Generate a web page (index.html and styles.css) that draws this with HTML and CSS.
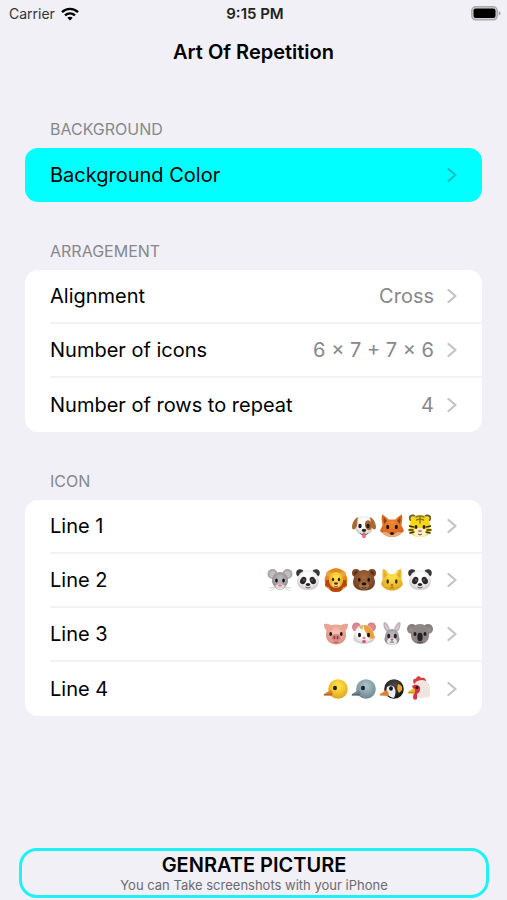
FILE: index.html
```html
<!DOCTYPE html>
<html lang="en">
<head>
    <meta charset="UTF-8">
    <meta name="viewport" content="width=device-width, initial-scale=1.0">
    <title>Art Of Repetition</title>
    <link rel="stylesheet" href="styles.css">
</head>
<body>
    <!-- Shared icons -->
    <svg class="sprite" aria-hidden="true">
        <defs>
            <radialGradient id="g-white" cx=".5" cy=".4" r=".6"><stop offset=".5" stop-color="#fbfafa"/><stop offset="1" stop-color="#cfc9c8"/></radialGradient>
            <radialGradient id="g-orange" cx=".5" cy=".4" r=".6"><stop offset="0" stop-color="#f08a35"/><stop offset="1" stop-color="#d2611b"/></radialGradient>
            <radialGradient id="g-yellow" cx=".5" cy=".35" r=".65"><stop offset=".2" stop-color="#fddc45"/><stop offset="1" stop-color="#dfa41c"/></radialGradient>
            <radialGradient id="g-grey" cx=".5" cy=".4" r=".6"><stop offset=".2" stop-color="#b9b5b8"/><stop offset="1" stop-color="#8b868a"/></radialGradient>
            <radialGradient id="g-brown" cx=".5" cy=".35" r=".65"><stop offset="0" stop-color="#a8693c"/><stop offset="1" stop-color="#6f3f20"/></radialGradient>
            <radialGradient id="g-pink" cx=".5" cy=".4" r=".6"><stop offset=".2" stop-color="#f6bcae"/><stop offset="1" stop-color="#d98f83"/></radialGradient>
            <radialGradient id="g-blue" cx=".5" cy=".35" r=".65"><stop offset=".1" stop-color="#a9c0c6"/><stop offset="1" stop-color="#6c8791"/></radialGradient>
            <radialGradient id="g-black" cx=".5" cy=".3" r=".7"><stop offset="0" stop-color="#4b4b4d"/><stop offset="1" stop-color="#111"/></radialGradient>
        </defs>

        <symbol id="chevron" viewBox="0 0 10 16">
            <path d="M1.5 2 L8.5 8 L1.5 14" fill="none" stroke="currentColor" stroke-width="2.300" stroke-linecap="round" stroke-linejoin="round"/>
        </symbol>

        <symbol id="dog" viewBox="0 0 28 28">
            <path d="M14 4C8 4 5 8 5 14c0 6 4 9 9 9s9-3 9-9c0-6-3-10-9-10z" fill="url(#g-white)"/>
            <path d="M16 9c3-2 6 1 6 5 0 3-2 5-4 4-3-1-4-7-2-9z" fill="#a8672e"/>
            <path d="M8 5C5 6 2 11 2 15c0 3 2 3 4 1 2-3 1-8 2-11zM20 5c3 1 6 6 6 10 0 3-2 3-4 1-2-3-1-8-2-11z" fill="#a96a34"/>
            <ellipse cx="10" cy="14" rx="1.700" ry="2.300" fill="#221a17"/>
            <ellipse cx="18" cy="14" rx="1.700" ry="2.300" fill="#221a17"/>
            <path d="M12 22h4v2c0 3-4 3-4 0z" fill="#ef6f8d"/>
            <path d="M14 19v2m-4 0c1 2 3 2 4 0 1 2 3 2 4 0" fill="none" stroke="#6c5550" stroke-width=".8"/>
            <ellipse cx="14" cy="18.300" rx="2.300" ry="1.500" fill="#2a2020"/>
        </symbol>

        <symbol id="fox" viewBox="0 0 28 28">
            <path d="M4 2.500c2.500 1 5 3 6.500 5h7c1.500-2 4-4 6.500-5 .8 4 0 8-.6 10.500L26 19c-3 3-7 6-12 6s-9-3-12-6l2.600-6C4 10.500 3.200 6.500 4 2.500z" fill="url(#g-orange)"/>
            <path d="M5.500 5l3.500 4-3 3zM22.500 5L19 9l3 3z" fill="#8d421b"/>
            <path d="M4 20.500c3-1 6 0 7.500 1.500h5c1.500-1.500 4.500-2.500 7.500-1.500-3 3-6 4.500-10 4.500s-7-1.500-10-4.500z" fill="#e9ab78"/>
            <ellipse cx="9.700" cy="15" rx="1.500" ry="2.200" fill="#211512"/>
            <ellipse cx="18.300" cy="15" rx="1.500" ry="2.200" fill="#211512"/>
            <ellipse cx="14" cy="21.500" rx="2" ry="1.500" fill="#241615"/>
        </symbol>

        <symbol id="tiger" viewBox="0 0 28 28">
            <circle cx="6.500" cy="6" r="3.600" fill="#6b5a22"/><circle cx="21.500" cy="6" r="3.600" fill="#6b5a22"/>
            <circle cx="6.800" cy="6.500" r="2.300" fill="#f2d94b"/><circle cx="21.200" cy="6.500" r="2.300" fill="#f2d94b"/>
            <path d="M14 3C8 3 4 7 4 13l-1 6c2 4 6 6 11 6s9-2 11-6l-1-6c0-6-4-10-10-10z" fill="#f8d61c"/>
            <path d="M7 20c0-3 3-4 7-4s7 1 7 4-3 5-7 5-7-2-7-5z" fill="#faf0cb"/>
            <path d="M10 5q4-2 8 0M10.500 8q3.500-2 7 0M14 4v7" fill="none" stroke="#8c7a12" stroke-width="1.500" stroke-linecap="round"/>
            <path d="M3.500 14l4 1M3 18l4 0M4 21l4-1M24.500 14l-4 1M25 18l-4 0M24 21l-4-1" fill="none" stroke="#392d16" stroke-width="1.500" stroke-linecap="round"/>
            <ellipse cx="10" cy="15" rx="1.400" ry="2" fill="#201b13"/><ellipse cx="18" cy="15" rx="1.400" ry="2" fill="#201b13"/>
            <ellipse cx="14" cy="19" rx="2" ry="1.300" fill="#d98076"/>
            <path d="M12 22q2 2 4 0" fill="none" stroke="#6d4931"/>
        </symbol>

        <symbol id="mouse" viewBox="0 0 28 28">
            <circle cx="6.500" cy="8" r="5" fill="#a9a5a9"/><circle cx="21.500" cy="8" r="5" fill="#a9a5a9"/>
            <circle cx="6.700" cy="8.500" r="3.200" fill="#c7bcc0"/><circle cx="21.300" cy="8.500" r="3.200" fill="#c7bcc0"/>
            <path d="M14 6c-5 0-8 4-8 9 0 4 5 9 8 9s8-5 8-9c0-5-3-9-8-9z" fill="url(#g-grey)"/>
            <path d="M9 20q5-5 10 0-3 4-5 4t-5-4z" fill="#e4dfdf"/>
            <ellipse cx="10.500" cy="14.500" rx="1.300" ry="2" fill="#171417"/><ellipse cx="17.500" cy="14.500" rx="1.300" ry="2" fill="#171417"/>
            <ellipse cx="14" cy="19.500" rx="2" ry="1.400" fill="#eb8da0"/>
            <path d="M9 21l-6 1M9 22l-5 3M19 21l6 1M19 22l5 3" stroke="#c6c3c5" stroke-width=".7"/>
        </symbol>

        <symbol id="panda" viewBox="0 0 28 28">
            <circle cx="6" cy="7" r="3.800" fill="#373638"/><circle cx="22" cy="7" r="3.800" fill="#373638"/>
            <path d="M14 4C8 4 3 9 3 15c0 6 5 9 11 9s11-3 11-9c0-6-5-11-11-11z" fill="url(#g-white)"/>
            <ellipse cx="9.200" cy="14.500" rx="2.900" ry="3.800" transform="rotate(25 9.200 14.500)" fill="#29282a"/>
            <ellipse cx="18.800" cy="14.500" rx="2.900" ry="3.800" transform="rotate(-25 18.800 14.500)" fill="#29282a"/>
            <circle cx="10" cy="14" r=".8" fill="#858287"/><circle cx="18" cy="14" r=".8" fill="#858287"/>
            <ellipse cx="14" cy="18.500" rx="2.200" ry="1.500" fill="#222"/>
            <path d="M11.500 21q2.500 2 5 0" fill="none" stroke="#5e5a5d"/>
        </symbol>

        <symbol id="lion" viewBox="0 0 28 28">
            <path d="M14 2l4 1 4 2 2 4 1.500 4-.5 4-1 4-4 3-3 2-3 0-3 0-3-2-4-3-1-4-.5-4L4 9l2-4 4-2z" fill="#e8861a"/>
            <path d="M4 14l-1 6 4 1 2 4 5 1 5-1 2-4 4-1-1-6z" fill="#b5450f"/>
            <circle cx="7" cy="8" r="2.800" fill="#eba43a"/><circle cx="21" cy="8" r="2.800" fill="#eba43a"/>
            <path d="M14 6c-5 0-7 3-7 8 0 5 3 8 7 8s7-3 7-8c0-5-2-8-7-8z" fill="url(#g-yellow)"/>
            <ellipse cx="14" cy="18.500" rx="3.800" ry="2.500" fill="#f7dda0"/>
            <ellipse cx="11" cy="13.500" rx="1.200" ry="1.800" fill="#2c1a0d"/><ellipse cx="17" cy="13.500" rx="1.200" ry="1.800" fill="#2c1a0d"/>
            <ellipse cx="14" cy="17.500" rx="2" ry="1.300" fill="#5b3017"/>
            <path d="M12 20q2 1.500 4 0" fill="none" stroke="#75421f" stroke-width=".8"/>
        </symbol>

        <symbol id="bear" viewBox="0 0 28 28">
            <circle cx="6" cy="7" r="4" fill="#7d4a29"/><circle cx="22" cy="7" r="4" fill="#7d4a29"/>
            <circle cx="6.200" cy="7.300" r="2" fill="#4f2d19"/><circle cx="21.800" cy="7.300" r="2" fill="#4f2d19"/>
            <path d="M14 4C8 4 3.500 9 3 16c0 6 5 8.500 11 8.500S25 22 25 16C24.500 9 20 4 14 4z" fill="url(#g-brown)"/>
            <ellipse cx="14" cy="19.500" rx="5" ry="4" fill="#a87549"/>
            <ellipse cx="9.300" cy="13.800" rx="1.300" ry="1.900" fill="#1b100b"/><ellipse cx="18.700" cy="13.800" rx="1.300" ry="1.900" fill="#1b100b"/>
            <ellipse cx="14" cy="17.800" rx="2.600" ry="1.600" fill="#25150f"/>
            <path d="M11.500 21.500q2.500 1.500 5 0" fill="none" stroke="#4d2a19"/>
        </symbol>

        <symbol id="cat" viewBox="0 0 28 28">
            <path d="M5 3c2 0 5 3 6 5h6c1-2 4-5 6-5 1 4 .5 8 .5 11L25 18c-2 4-6 6.500-11 6.500S5 22 3 18l1.500-4C4.500 11 4 7 5 3z" fill="url(#g-yellow)"/>
            <path d="M6.200 6L9 9l-3 3zM21.800 6L19 9l3 3z" fill="#dfa534"/>
            <ellipse cx="9.700" cy="15.500" rx="1.200" ry="2.200" fill="#403012"/><ellipse cx="18.300" cy="15.500" rx="1.200" ry="2.200" fill="#403012"/>
            <ellipse cx="14" cy="19" rx="1.500" ry="1" fill="#c06d49"/>
            <path d="M14 20v1m-2 1q2 0 2-1 0 1 2 1" fill="none" stroke="#94661d" stroke-width=".8"/>
        </symbol>

        <symbol id="pig" viewBox="0 0 28 28">
            <path d="M14 4.500C7 4.500 4 9 4 15c0 6 5 9.500 10 9.500S24 21 24 15c0-6-3-10.500-10-10.500z" fill="url(#g-pink)"/>
            <path d="M2 4c4-1 8 1 9 4l-5 4C3 10 2 7 2 4zM26 4c-4-1-8 1-9 4l5 4c3-2 4-5 4-8z" fill="#e9a494"/>
            <ellipse cx="8.700" cy="14" rx="1.400" ry="2" fill="#241716"/><ellipse cx="19.300" cy="14" rx="1.400" ry="2" fill="#241716"/>
            <ellipse cx="14" cy="17.500" rx="4.500" ry="3.400" fill="#d98484"/>
            <ellipse cx="12.400" cy="17.500" rx=".9" ry="1.500" fill="#7b373c"/><ellipse cx="15.600" cy="17.500" rx=".9" ry="1.500" fill="#7b373c"/>
            <path d="M11.500 22q2.500 1.500 5 0" fill="none" stroke="#a5584f"/>
        </symbol>

        <symbol id="hamster" viewBox="0 0 28 28">
            <circle cx="6.500" cy="7" r="4.500" fill="#c68b82"/><circle cx="21.500" cy="7" r="4.500" fill="#c68b82"/>
            <circle cx="6.700" cy="7.300" r="3.200" fill="#e5859a"/><circle cx="21.300" cy="7.300" r="3.200" fill="#e5859a"/>
            <path d="M14 5C8 5 5 9 4 15c-3 5 3 9 10 9s13-4 10-9c-1-6-4-10-10-10z" fill="url(#g-white)"/>
            <path d="M14 5c5 0 9 4 10 10l1 3c-4 2-7 0-8-3-1-4-4-5-3-10z" fill="#eda13c"/>
            <path d="M14 5c-2 0-4 1-5 2l3 3z" fill="#edaf5c"/>
            <ellipse cx="9.500" cy="15" rx="1.500" ry="2.200" fill="#201817"/><ellipse cx="18.500" cy="15" rx="1.500" ry="2.200" fill="#201817"/>
            <ellipse cx="14" cy="18" rx="1.700" ry="1.200" fill="#ed7f91"/>
            <path d="M12 22v-1q2-2 4 0v1q-2 2-4 0" fill="#d5566e"/>
        </symbol>

        <symbol id="rabbit" viewBox="0 0 28 28">
            <path d="M9 12C5 9 5 3 6 2c3 0 6 5 6 9zM19 12c4-3 4-9 3-10-3 0-6 5-6 9z" fill="#b9b5b8"/>
            <path d="M9.500 10C7 8 6.500 5 7 4c2 1 3 4 3.500 6zM18.500 10C21 8 21.500 5 21 4c-2 1-3 4-3.500 6z" fill="#dbc8cd"/>
            <path d="M14 9c-4 0-7 4-7 8-2 4 2 8 7 8s9-4 7-8c0-4-3-8-7-8z" fill="url(#g-grey)"/>
            <ellipse cx="14" cy="21.500" rx="5" ry="3.500" fill="#e8e5e6"/>
            <ellipse cx="10.700" cy="16" rx="1.500" ry="2.200" fill="#252126"/><ellipse cx="17.300" cy="16" rx="1.500" ry="2.200" fill="#252126"/>
            <ellipse cx="14" cy="19.500" rx="1.500" ry="1" fill="#b96a78"/>
            <path d="M14 20v2m-2 0q2 1 4 0" fill="none" stroke="#71686c" stroke-width=".8"/>
        </symbol>

        <symbol id="koala" viewBox="0 0 28 28">
            <circle cx="6" cy="9" r="5" fill="#857d7d"/><circle cx="22" cy="9" r="5" fill="#857d7d"/>
            <circle cx="5.500" cy="10" r="2.800" fill="#968d8d"/><circle cx="22.500" cy="10" r="2.800" fill="#968d8d"/>
            <path d="M14 4C8 4 5 8 5 15c0 6 4 9 9 9s9-3 9-9c0-7-3-11-9-11z" fill="#8f8786"/>
            <ellipse cx="9" cy="14" rx="1.500" ry="2" fill="#211e1f"/><ellipse cx="19" cy="14" rx="1.500" ry="2" fill="#211e1f"/>
            <ellipse cx="14" cy="17" rx="2.700" ry="4.300" fill="#252324"/>
            <path d="M11 22q3 1.500 6 0" fill="none" stroke="#4d4747"/>
        </symbol>

        <symbol id="chick" viewBox="0 0 28 28">
            <circle cx="16" cy="14" r="9.800" fill="url(#g-yellow)"/>
            <path d="M8.500 15l-6.500 4q-1 1 0 1.500l8 .5q2-3-1.500-6z" fill="#dd842c"/>
            <path d="M2 20l8-1" stroke="#9c5820" stroke-width=".8"/>
            <ellipse cx="13" cy="13" rx="2" ry="2.300" fill="#29200d"/>
        </symbol>

        <symbol id="bird" viewBox="0 0 28 28">
            <circle cx="16" cy="14" r="9.800" fill="url(#g-blue)"/>
            <path d="M8.500 15l-6.500 4q-1 1 0 1.500l8 .5q2-3-1.500-6z" fill="#71858d"/>
            <path d="M2 20l8-1" stroke="#485b64" stroke-width=".8"/>
            <ellipse cx="13" cy="13" rx="2" ry="2.300" fill="#17232b"/>
        </symbol>

        <symbol id="penguin" viewBox="0 0 28 28">
            <circle cx="16" cy="14" r="9.800" fill="url(#g-black)"/>
            <path d="M9 12q4-3 7 0 3 5 0 11-6-1-8-6z" fill="#e9edf0"/>
            <path d="M20 9q5 1 4 6l-3 3q-3-4-1-9z" fill="#f0a725"/>
            <path d="M8.500 15l-6.500 4q-1 1 0 1.500l8 .5q2-3-1.500-6z" fill="#db842f"/>
            <ellipse cx="13" cy="13.500" rx="1.900" ry="2.300" fill="#15171b"/>
        </symbol>

        <symbol id="chicken" viewBox="0 0 28 28">
            <path d="M8 9C6 5 8 3 10 4c0-3 4-4 5-1 3-1 6 1 5 5l-8 3z" fill="#da3b41"/>
            <path d="M16 5c-6 0-9 4-9 9 0 5 2 9 8 9l8-1c2-2 1-5 1-8 0-5-3-9-8-9z" fill="#ede5df"/>
            <path d="M6 11q5-3 8 1 1 5-3 7v5q-3 2-4-1l1-7z" fill="#d4353e"/>
            <path d="M8 13l-6 4q-1 1 0 1l6 1q2-3 0-6z" fill="#f0b92e"/>
            <path d="M2 18l6-1" stroke="#b67b24" stroke-width=".8"/>
            <circle cx="11" cy="12.500" r="1.600" fill="#29171a"/>
        </symbol>
    </svg>

    <div class="status-bar">
        <div class="carrier">
            <span>Carrier</span>
            <svg class="wifi" viewBox="0 0 18 14" aria-hidden="true">
                <g fill="none" stroke="#000" stroke-width="2.400">
                    <path d="M1 5.200C5.500 .8 12.500 .8 17 5.200"/>
                    <path d="M4 8.400C7 5.700 11 5.700 14 8.400"/>
                </g>
                <path d="M6.300 10.700Q9 8.600 11.700 10.700L9 13.600z"/>
            </svg>
        </div>
        <span class="time">9:15 PM</span>
        <div class="battery-wrap">
            <svg class="battery" viewBox="0 0 30 15" aria-hidden="true">
                <rect x=".8" y=".8" width="25.400" height="13" rx="4" fill="#d4d4d7" stroke="#aaaaac" stroke-width="1.500"/>
                <rect x="2.500" y="2.500" width="22" height="9.600" rx="2"/>
                <path d="M27.600 5q2 .5 2 2.300t-2 2.300z" fill="#aaaaac"/>
            </svg>
        </div>
    </div>

    <header class="header">
        <h1>Art Of Repetition</h1>
    </header>

    <main class="main">
        <section class="section">
            <h2>Background</h2>
            <div class="card card-color">
                <a href="#" class="row">
                    <span class="label">Background Color</span>
                    <svg class="chevron"><use href="#chevron"/></svg>
                </a>
            </div>
        </section>

        <section class="section">
            <h2>Arragement</h2>
            <div class="card">
                <a href="#" class="row">
                    <span class="label">Alignment</span>
                    <span class="value">Cross</span>
                    <svg class="chevron"><use href="#chevron"/></svg>
                </a>
                <a href="#" class="row">
                    <span class="label">Number of icons</span>
                    <span class="value">6 × 7 + 7 × 6</span>
                    <svg class="chevron"><use href="#chevron"/></svg>
                </a>
                <a href="#" class="row">
                    <span class="label">Number of rows to repeat</span>
                    <span class="value">4</span>
                    <svg class="chevron"><use href="#chevron"/></svg>
                </a>
            </div>
        </section>

        <section class="section">
            <h2>Icon</h2>
            <div class="card">
                <a href="#" class="row">
                    <span class="label">Line 1</span>
                    <span class="icons">
                        <svg><use href="#dog"/></svg>
                        <svg><use href="#fox"/></svg>
                        <svg><use href="#tiger"/></svg>
                    </span>
                    <svg class="chevron"><use href="#chevron"/></svg>
                </a>
                <a href="#" class="row">
                    <span class="label">Line 2</span>
                    <span class="icons">
                        <svg><use href="#mouse"/></svg>
                        <svg><use href="#panda"/></svg>
                        <svg><use href="#lion"/></svg>
                        <svg><use href="#bear"/></svg>
                        <svg><use href="#cat"/></svg>
                        <svg><use href="#panda"/></svg>
                    </span>
                    <svg class="chevron"><use href="#chevron"/></svg>
                </a>
                <a href="#" class="row">
                    <span class="label">Line 3</span>
                    <span class="icons">
                        <svg><use href="#pig"/></svg>
                        <svg><use href="#hamster"/></svg>
                        <svg><use href="#rabbit"/></svg>
                        <svg><use href="#koala"/></svg>
                    </span>
                    <svg class="chevron"><use href="#chevron"/></svg>
                </a>
                <a href="#" class="row">
                    <span class="label">Line 4</span>
                    <span class="icons">
                        <svg><use href="#chick"/></svg>
                        <svg><use href="#bird"/></svg>
                        <svg><use href="#penguin"/></svg>
                        <svg><use href="#chicken"/></svg>
                    </span>
                    <svg class="chevron"><use href="#chevron"/></svg>
                </a>
            </div>
        </section>
    </main>

    <footer class="footer">
        <button type="button" class="generate">
            <span class="generate-title">GENRATE PICTURE</span>
            <span class="generate-note">You can Take screenshots with your iPhone</span>
        </button>
    </footer>
</body>
</html>
```
FILE: styles.css
```css
/* Global Styles */
* {
    box-sizing: border-box;
}

body {
    display: flex;
    flex-direction: column;
    min-height: 100vh;
    margin: 0;
    background-color: #f1f0f6;
    font-family: Inter, "Liberation Sans", sans-serif;
    color: #000;
}

.sprite {
    position: absolute;
    width: 0;
    height: 0;
}

/* Status Bar */
.status-bar {
    display: grid;
    grid-template-columns: 1fr auto 1fr;
    align-items: center;
    height: 27px;
    padding: 0 6px 0 9px;
    font-size: 14px;
}

.carrier {
    display: flex;
    align-items: center;
    gap: 6px;
    color: #333;
}

.wifi {
    width: 18px;
    height: 14px;
}

.time {
    font-size: 15px;
    font-weight: 600;
    color: #222;
}

.battery-wrap {
    display: flex;
    justify-content: flex-end;
}

.battery {
    width: 30px;
    height: 15px;
}

/* Header Styles */
.header h1 {
    margin: 0;
    font-size: 20px;
    font-weight: 600;
    line-height: 50px;
    text-align: center;
}

/* List Styles */
.main {
    padding: 3px 25px 24px;
}

.section h2 {
    margin: 0;
    padding: 39px 25px 9px;
    font-size: 16px;
    font-weight: 400;
    line-height: 20px;
    text-transform: uppercase;
    color: #88878c;
}

.card {
    border-radius: 13px;
    background-color: #fff;
    overflow: hidden;
}

.card-color {
    background-color: #00ffff;
}

.row {
    display: flex;
    align-items: center;
    height: 54px;
    padding-right: 25px;
    margin-left: 25px;
    font-size: 20px;
    color: #000;
    text-decoration: none;
}

.row:not(:last-child) {
    border-bottom: 2px solid #f3f3f5;
}

.label {
    flex: 1;
}

.value {
    color: #88888b;
}

.icons {
    display: flex;
}

.icons svg {
    width: 28px;
    height: 28px;
}

.chevron {
    width: 10px;
    height: 16px;
    margin-left: 13px;
    color: #c4c4c7;
}

.card-color .chevron {
    color: #13c3c6;
}

/* Footer Styles */
.footer {
    margin-top: auto;
    padding: 0 18px 2px 19px;
}

.generate {
    display: flex;
    flex-direction: column;
    align-items: center;
    justify-content: center;
    width: 100%;
    height: 50px;
    padding: 0;
    border: 3px solid #1ff2f7;
    border-radius: 18px;
    background: none;
    font-family: inherit;
    cursor: pointer;
}

.generate-title {
    font-size: 20px;
    font-weight: 600;
    line-height: 24px;
    color: #000;
}

.generate-note {
    font-size: 13px;
    line-height: 16px;
    color: #6b6b70;
}
```
